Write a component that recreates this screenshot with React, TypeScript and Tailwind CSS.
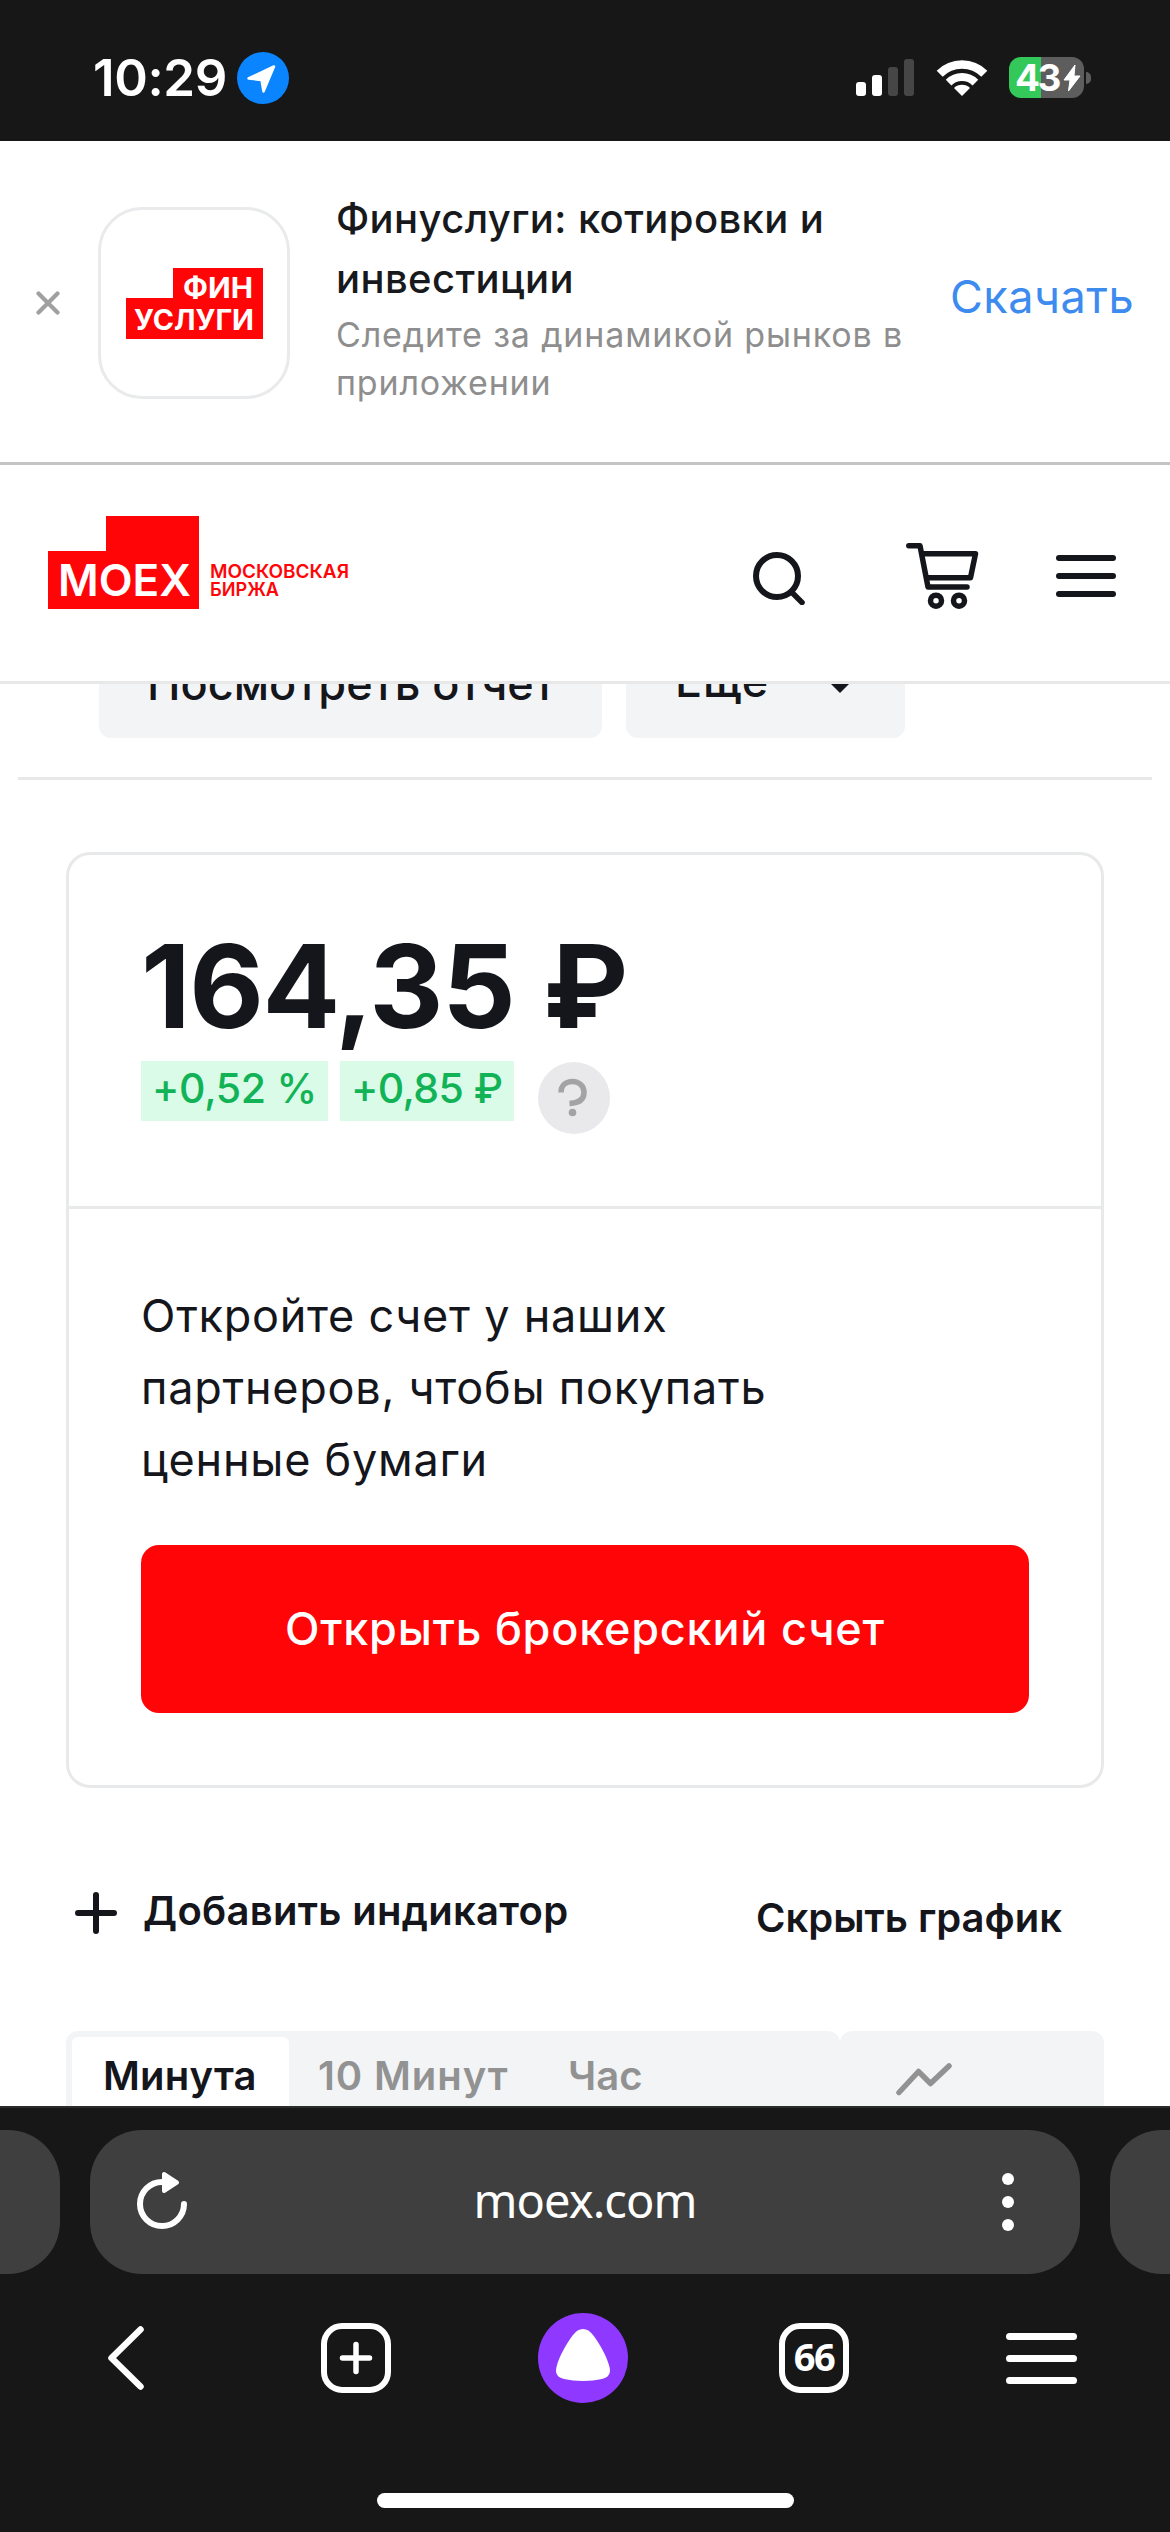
import React from "react";
import clsx from "clsx";

interface IconProps {
  className?: string;
}

interface Tab {
  id: string;
  name: string;
  active?: boolean;
  className: string;
}

const tabs: Tab[] = [
  {
    id: "1m",
    name: "Минута",
    active: true,
    className: "w-[217px] pl-[31px] tracking-[0.2px]",
  },
  { id: "10m", name: "10 Минут", className: "ml-[29px] w-[250px] tracking-[0.9px]" },
  { id: "1h", name: "Час", className: "" },
];

const LocationIcon: React.FC<IconProps> = ({ className }) => (
  <svg viewBox="0 0 52 52" className={className}>
    <circle cx="26" cy="26" r="26" fill="#0a84ff" />
    <path
      d="M37 14.5 26.5 39.5 24.5 28 11.5 26.5Z"
      fill="#fff"
      stroke="#fff"
      strokeWidth="2.5"
      strokeLinejoin="round"
    />
  </svg>
);

const SignalIcon: React.FC<IconProps> = ({ className }) => (
  <svg viewBox="0 0 58 38" className={className}>
    <rect x="0" y="23" width="10" height="14" rx="3" fill="#fff" />
    <rect x="16" y="16" width="10" height="21" rx="3" fill="#fff" />
    <rect x="32" y="8" width="10" height="29" rx="3" fill="#464646" />
    <rect x="48" y="0" width="10" height="37" rx="3" fill="#464646" />
  </svg>
);

const WifiIcon: React.FC<IconProps> = ({ className }) => (
  <svg viewBox="0 0 52 38" fill="none" className={className}>
    <path d="M3.7 14.7a31.5 31.5 0 0 1 44.6 0" stroke="#fff" strokeWidth="8.5" />
    <path d="M12.6 23.6a19 19 0 0 1 26.8 0" stroke="#fff" strokeWidth="8" />
    <path d="M26 37l-8-8a11.5 11.5 0 0 1 16 0z" fill="#fff" />
  </svg>
);

const Battery: React.FC = () => (
  <div className="flex items-center gap-[2px]">
    <div className="flex h-[41px] w-[75px] items-center rounded-[12px] bg-[linear-gradient(90deg,#34c759_32px,#5d5d5d_32px)] pl-[6px]">
      <span className="text-[37px] leading-[41px] font-bold tracking-[-2.5px] text-white">
        43
      </span>
      <svg viewBox="0 0 20 28" className="ml-[3px] h-7 w-5 shrink-0">
        <path
          d="M13 1 2 16h6L6.5 27 18 12h-6z"
          fill="#fff"
          stroke="#fff"
          strokeWidth="1"
          strokeLinejoin="round"
        />
      </svg>
    </div>
    <div className="h-3 w-[5px] rounded-r-full bg-[#5d5d5d]" />
  </div>
);

const FinuslugiLogo: React.FC<IconProps> = ({ className }) => (
  <svg viewBox="0 0 137 71" className={className}>
    <path d="M47 0h90v71H0V30h47z" fill="#ff0508" />
    <g fill="#fff" fontSize="29" fontWeight="700">
      <text x="57" y="29.5" textLength="70" lengthAdjust="spacingAndGlyphs">
        ФИН
      </text>
      <text x="8" y="61.5" textLength="120" lengthAdjust="spacingAndGlyphs">
        УСЛУГИ
      </text>
    </g>
  </svg>
);

const MoexLogo: React.FC<IconProps> = ({ className }) => (
  <svg viewBox="0 0 302 93" className={className}>
    <path d="M58 0h93v93H0V35h58z" fill="#ff0508" />
    <text
      x="10"
      y="80"
      fill="#fff"
      fontSize="44"
      fontWeight="600"
      textLength="133"
      lengthAdjust="spacingAndGlyphs"
    >
      MOEX
    </text>
    <g fill="#ff0508" fontSize="19" fontWeight="600">
      <text x="162" y="62" textLength="139" lengthAdjust="spacingAndGlyphs">
        МОСКОВСКАЯ
      </text>
      <text x="162" y="80" textLength="69" lengthAdjust="spacingAndGlyphs">
        БИРЖА
      </text>
    </g>
  </svg>
);

const SearchIcon: React.FC<IconProps> = ({ className }) => (
  <svg
    viewBox="0 0 52 54"
    fill="none"
    stroke="#14161c"
    strokeWidth="6"
    strokeLinecap="round"
    className={className}
  >
    <circle cx="24" cy="25" r="21" />
    <path d="M39.5 42l9.5 9.5" strokeWidth="5.5" />
  </svg>
);

const CartIcon: React.FC<IconProps> = ({ className }) => (
  <svg
    viewBox="0 0 76 70"
    fill="none"
    stroke="#14161c"
    strokeWidth="5.5"
    strokeLinecap="round"
    strokeLinejoin="round"
    className={className}
  >
    <path d="M4.8 4.7H16l8 41.3h39" />
    <path d="M18.8 12.7h52.7l-5 24H24" />
    <circle cx="32" cy="59.7" r="5.5" />
    <circle cx="55" cy="59.7" r="5.5" />
  </svg>
);

const StatusBar: React.FC = () => (
  <div className="flex h-[141px] shrink-0 items-start justify-between bg-[#171717] pr-[79px] pl-[93px]">
    <div className="flex items-center gap-[10px] pt-[52px]">
      <span className="text-[51px] leading-[52px] font-semibold tracking-[-0.4px] text-white">
        10:29
      </span>
      <LocationIcon className="size-[52px]" />
    </div>
    <div className="flex items-center pt-[57px]">
      <SignalIcon className="mr-[22px] h-[38px] w-[58px]" />
      <WifiIcon className="mr-[21px] h-[38px] w-[52px]" />
      <Battery />
    </div>
  </div>
);

const AppBanner: React.FC = () => (
  <div className="flex h-[324px] shrink-0 items-start border-b-3 border-[#c4c4c4] pl-9">
    <svg
      viewBox="0 0 24 24"
      className="mt-[150px] size-6"
      stroke="#a0a0a0"
      strokeWidth="4.2"
      strokeLinecap="round"
    >
      <path d="M2.5 2.5l19 19M21.5 2.5l-19 19" />
    </svg>
    <div className="mt-[66px] ml-[38px] flex size-48 items-center justify-center rounded-[44px] border-3 border-[#e8eaeb]">
      <FinuslugiLogo className="h-[71px] w-[137px]" />
    </div>
    <div className="mt-12 ml-[46px] w-[600px]">
      <p className="text-[40px] leading-[60px] font-medium tracking-[0.4px] text-[#17191c]">
        Финуслуги: котировки и
        <br />
        инвестиции
      </p>
      <p className="mt-[2px] text-[34px] leading-[48px] tracking-[0.85px] text-[#8e8e8e]">
        Следите за динамикой рынков в
        <br />
        приложении
      </p>
    </div>
    <a className="mt-[126px] ml-[14px] text-[45px] leading-[60px] tracking-[0.5px] text-[#3d8bef]">
      Скачать
    </a>
  </div>
);

const Header: React.FC = () => (
  <header className="flex h-[219px] shrink-0 items-start justify-between border-b-3 border-[#e8e8e8] pr-[54px] pl-12">
    <MoexLogo className="mt-[51px] h-[93px] w-[302px]" />
    <div className="flex items-start">
      <SearchIcon className="mt-[86px] h-[54px] w-[52px]" />
      <CartIcon className="mt-[76px] ml-[99px] h-[70px] w-[76px]" />
      <div className="mt-[90px] ml-[76px] flex w-[60px] flex-col gap-3">
        <span className="h-[6px] rounded-full bg-[#14161c]" />
        <span className="h-[6px] rounded-full bg-[#14161c]" />
        <span className="h-[6px] rounded-full bg-[#14161c]" />
      </div>
    </div>
  </header>
);

const PriceCard: React.FC = () => (
  <section className="mx-[66px] mt-[72px] rounded-[24px] border-3 border-[#e8e9ea]">
    <div className="h-[354px] border-b-3 border-[#e8e9ea] px-[72px] pt-[72px]">
      <p className="text-[115px] leading-[120px] font-bold tracking-[-1.4px] [word-spacing:3px]">
        164,35 ₽
      </p>
      <div className="mt-[14px] flex items-start text-[41px] font-medium text-[#12b357]">
        <span className="h-[60px] w-[187px] bg-[#d9fbe8] pl-[11px] leading-[54px] tracking-[-0.3px]">
          +0,52 %
        </span>
        <span className="ml-3 h-[60px] w-[174px] bg-[#d9fbe8] pl-[11px] leading-[54px] tracking-[-0.6px]">
          +0,85 ₽
        </span>
        <svg viewBox="0 0 72 72" fill="none" className="mt-px ml-6 size-[72px]">
          <circle cx="36" cy="36" r="36" fill="#e9e9eb" />
          <path
            d="M23 30.5c0-7 5-11 11.5-11s11.5 4.5 11.5 11-4.5 10.5-14.5 11"
            stroke="#a3a3a6"
            strokeWidth="5.5"
          />
          <circle cx="34.5" cy="50.5" r="3.8" fill="#a3a3a6" />
        </svg>
      </div>
    </div>
    <div className="px-[72px] pt-[71px] pb-[72px]">
      <p className="w-[700px] text-[45px] leading-[72px] tracking-[0.75px]">
        Откройте счет у наших
        <br />
        партнеров, чтобы покупать
        <br />
        ценные бумаги
      </p>
      <button className="mt-[49px] flex h-[168px] w-full items-center justify-center rounded-[18px] bg-[#ff0508] text-[45px] font-medium tracking-[0.8px] text-white">
        Открыть брокерский счет
      </button>
    </div>
  </section>
);

const ChartTabs: React.FC = () => (
  <div className="mx-[66px] mt-auto flex h-[75px] shrink-0 text-[40px] font-semibold text-[#929292]">
    <div className="flex w-[774px] rounded-t-[12px] bg-[#f3f4f6] pt-[6px] pl-[6px]">
      {tabs.map(({ id, name, active, className }) => (
        <button
          key={id}
          className={clsx(
            "flex items-center pt-[9px] text-left leading-[60px]",
            active && "rounded-t-[6px] bg-white text-[#14161c]",
            className
          )}
        >
          {name}
        </button>
      ))}
    </div>
    <div className="flex-1 rounded-t-[12px] bg-[#f3f4f6] pt-[30px] pl-[54px]">
      <svg viewBox="0 0 60 38" className="h-[38px] w-[60px]" fill="none">
        <path
          d="M5 31.5 24.5 10.5 36.5 22.5 55 5"
          stroke="#929292"
          strokeWidth="5.5"
          strokeLinecap="round"
          strokeLinejoin="round"
        />
      </svg>
    </div>
  </div>
);

const BrowserBar: React.FC = () => (
  <footer className="flex h-[426px] shrink-0 flex-col border-t-2 border-[#2b2c2c] bg-[#171717] text-white">
    <div className="mt-[22px] flex h-36 gap-[30px]">
      <div className="w-[60px] rounded-r-[52px] bg-[#3f3f3f]" />
      <div className="flex w-[990px] items-center justify-between rounded-[52px] bg-[#3f3f3f] pr-[66px] pl-11">
        <svg viewBox="0 0 56 64" className="mb-1 h-16 w-14" fill="none">
          <path
            d="M50 36a22 22 0 1 1-22-22"
            stroke="#fff"
            strokeWidth="6"
            strokeLinecap="round"
          />
          <path
            d="M30 6v17l13-8.5z"
            fill="#fff"
            stroke="#fff"
            strokeWidth="4"
            strokeLinejoin="round"
          />
        </svg>
        <span className="mb-1 pr-[22px] font-['Noto_Sans',sans-serif] text-[47px] leading-[60px] tracking-[-0.9px]">
          moex.com
        </span>
        <div className="flex w-3 flex-col gap-[11px]">
          <span className="size-3 rounded-full bg-white" />
          <span className="size-3 rounded-full bg-white" />
          <span className="size-3 rounded-full bg-white" />
        </div>
      </div>
      <div className="w-[60px] rounded-l-[52px] bg-[#3f3f3f]" />
    </div>
    <nav className="mt-[39px] flex h-[90px] items-center pl-[108px]">
      <svg viewBox="0 0 36 64" className="h-16 w-9" fill="none">
        <path
          d="M32.5 3.5 3.5 32l29 28.5"
          stroke="#fff"
          strokeWidth="6.5"
          strokeLinecap="round"
          strokeLinejoin="round"
        />
      </svg>
      <div className="ml-[177px] flex size-[70px] items-center justify-center rounded-[21px] border-6 border-white">
        <svg viewBox="0 0 34 34" className="size-[34px]">
          <path
            d="M17 3.5v27M3.5 17h27"
            stroke="#fff"
            strokeWidth="5.5"
            strokeLinecap="round"
          />
        </svg>
      </div>
      <svg viewBox="0 0 90 90" className="ml-[147px] size-[90px]">
        <circle cx="45" cy="45" r="45" fill="#8f38ff" />
        <path
          d="M45 16c4 0 7 2 10 6 7 9 14 22 16.5 32 1.8 7-1.5 10.5-7.5 12-11 2.5-27 2.5-38 0-6-1.5-9.3-5-7.5-12C21 44 28 31 35 22c3-4 6-6 10-6z"
          fill="#fff"
        />
      </svg>
      <div className="ml-[151px] flex size-[70px] items-center justify-center rounded-[21px] border-6 border-white pb-1">
        <span className="font-['Noto_Sans',sans-serif] text-[38px] leading-none font-bold tracking-[-1.5px]">
          66
        </span>
      </div>
      <div className="ml-[157px] flex w-[71px] flex-col gap-[15px]">
        <span className="h-[7px] rounded-full bg-white" />
        <span className="h-[7px] rounded-full bg-white" />
        <span className="h-[7px] rounded-full bg-white" />
      </div>
    </nav>
    <div className="mt-[90px] ml-[377px] h-[15px] w-[417px] rounded-full bg-white" />
  </footer>
);

export default function App() {
  return (
    <div className="flex h-[2532px] w-[1170px] flex-col overflow-hidden bg-white font-['Inter','Liberation_Sans',sans-serif] text-[#14161c]">
      <StatusBar />
      <AppBanner />
      <Header />
      <main className="flex min-h-0 flex-1 flex-col overflow-hidden">
        {/* scrolled half-way under the header */}
        <div className="-mt-[54px] flex h-[108px] shrink-0 gap-6 pl-[99px] text-[45px] font-medium">
          <button className="w-[503px] rounded-[12px] bg-[#f3f4f5] pl-12 text-left">
            Посмотреть отчет
          </button>
          <button className="flex w-[279px] items-center justify-between rounded-[12px] bg-[#f3f4f5] pr-[54px] pb-[6px] pl-[49px] tracking-[0.8px]">
            Еще
            <svg viewBox="0 0 22 14" className="mt-[10px] h-[14px] w-[22px]">
              <path d="M0 3h22L11 14z" fill="#14161c" />
            </svg>
          </button>
        </div>
        <div className="mx-[18px] mt-[39px] h-[3px] shrink-0 bg-[#e8e8e8]" />
        <PriceCard />
        <div className="mt-[93px] flex shrink-0 items-start justify-between pr-[108px] pl-[75px] text-[40px] leading-[60px] font-semibold">
          <button className="flex items-center gap-[26px] tracking-[0.3px]">
            <svg viewBox="0 0 42 42" className="mt-1 size-[42px]">
              <path
                d="M21 3v36M3 21h36"
                stroke="#14161c"
                strokeWidth="6"
                strokeLinecap="round"
              />
            </svg>
            Добавить индикатор
          </button>
          <button className="mt-[7px]">Скрыть график</button>
        </div>
        <ChartTabs />
      </main>
      <BrowserBar />
    </div>
  );
}
